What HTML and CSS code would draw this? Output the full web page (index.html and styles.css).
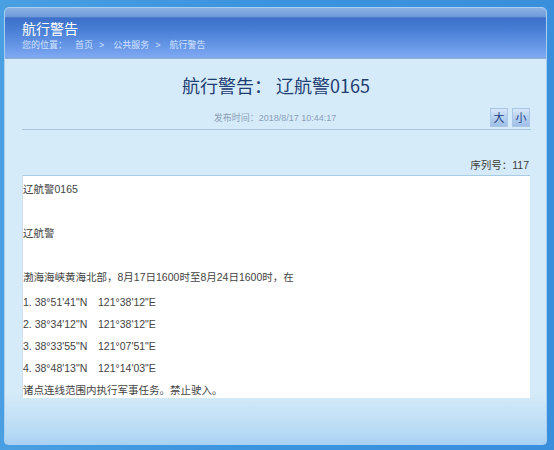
FILE: index.html
```html
<!DOCTYPE html>
<html lang="zh-CN">
<head>
<meta charset="utf-8">
<title>航行警告</title>
<link rel="stylesheet" href="styles.css">
</head>
<body>
<div class="frame">
  <header class="head">
    <h1 class="head-title">航行警告</h1>
    <nav class="crumbs"><span class="here">您的位置：</span><span>首页</span><span class="sep">&gt;</span><span>公共服务</span><span class="sep">&gt;</span><span>航行警告</span></nav>
  </header>
  <main class="main">
    <h2 class="title">航行警告： 辽航警0165</h2>
    <div class="meta">
      <span></span>
      <span class="time">发布时间：2018/8/17 10:44:17</span>
      <span class="sizes"><span class="sz">大</span><span class="sz">小</span></span>
    </div>
    <div class="seq">序列号：117</div>
    <div class="content">
      <div class="ln">辽航警0165</div>
      <div class="ln"></div>
      <div class="ln">辽航警</div>
      <div class="ln"></div>
      <div class="ln">渤海海峡黄海北部，8月17日1600时至8月24日1600时，在</div>
      <div class="coords">
        <div class="ln"><span class="lat">1. 38°51'41"N</span>121°38'12"E</div>
        <div class="ln"><span class="lat">2. 38°34'12"N</span>121°38'12"E</div>
        <div class="ln"><span class="lat">3. 38°33'55"N</span>121°07'51"E</div>
        <div class="ln"><span class="lat">4. 38°48'13"N</span>121°14'03"E</div>
        <div class="ln">诸点连线范围内执行军事任务。禁止驶入。</div>
      </div>
    </div>
  </main>
</div>
</body>
</html>
```

FILE: styles.css
```css
html, body {
  margin: 0;
  padding: 0;
}
body {
  width: 554px;
  height: 450px;
  overflow: hidden;
  background: linear-gradient(90deg, #4a9fe2 0, #3b93de 50%, #3a8fdc 100%);
  padding: 7px 7px 5px 4px;
  box-sizing: border-box;
  font-family: "Liberation Sans", "Noto Sans CJK SC", sans-serif;
}
.frame {
  height: 438px;
  box-sizing: border-box;
  border: 1px solid #a7d0f3;
  border-radius: 5px 5px 4px 4px;
  background: linear-gradient(180deg, #d6ebf9 0, #d6ebf9 88%, #b9dbf5 97%, #a9d1f2 100%);
  display: flex;
  flex-direction: column;
  overflow: hidden;
}
.head {
  height: 51px;
  box-sizing: border-box;
  padding: 11px 0 0 17px;
  background: linear-gradient(180deg, #8cb2e4 0, #6f9bd8 17%, #3c70c9 20%, #4a80d6 45%, #6696e6 75%, #7ea8f2 98%, #7f9fcf 100%);
  border-bottom: 1px solid #8fb0d6;
}
.head-title {
  margin: 0;
  font: normal 14px/18px "Noto Sans CJK SC", sans-serif;
  color: #ffffff;
}
.crumbs {
  margin-top: 1px;
  font: 9px/14px "Noto Sans CJK SC", sans-serif;
  color: #d3e3ff;
  display: flex;
}
.here {
  margin-right: 8px;
}
.sep {
  margin: 0 9px 0 6px;
  font-family: "Liberation Sans", sans-serif;
}
.main {
  padding: 14px 16px 0 17px;
  display: flex;
  flex-direction: column;
}
.title {
  margin: 0;
  text-align: center;
  font: normal 18px/24px "Noto Sans CJK SC", sans-serif;
  color: #1e3d72;
}
.meta {
  margin-top: 11px;
  height: 18px;
  display: grid;
  grid-template-columns: 1fr auto 1fr;
  align-items: center;
  padding-bottom: 3px;
  border-bottom: 1px solid #a6c6de;
  margin-right: -1px;
}
.time {
  font: 9px/18px "Liberation Sans", "Noto Sans CJK SC", sans-serif;
  color: #8aa0b8;
  padding-right: 3px;
}
.sizes {
  justify-self: end;
  display: flex;
  gap: 4px;
  margin-right: 1px;
}
.sz {
  width: 16px;
  height: 17px;
  border: 1px solid #a9c6e6;
  background: linear-gradient(180deg, #d7e7f8 0, #b7d0ef 50%, #9fbfe8 100%);
  font: 11px/17px "Noto Sans CJK SC", sans-serif;
  color: #1d3c84;
  text-align: center;
}
.seq {
  margin-top: 28px;
  text-align: right;
  font: 10.5px/14px "Liberation Sans", "Noto Sans CJK SC", sans-serif;
  color: #3c3c3c;
  padding-right: 1px;
}
.content {
  margin-top: 3px;
  height: 223px;
  box-sizing: border-box;
  padding-top: 2px;
  background: #ffffff;
  border-top: 1px solid #a9cbe6;
  border-left: 1px solid #d4dfe8;
  font: 10.5px/22px "Liberation Sans", "Noto Sans CJK SC", sans-serif;
  color: #444444;
}
.ln {
  height: 22px;
  white-space: nowrap;
}
.coords {
  padding-top: 3px;
}
.lat {
  display: inline-block;
  width: 75px;
}
```
